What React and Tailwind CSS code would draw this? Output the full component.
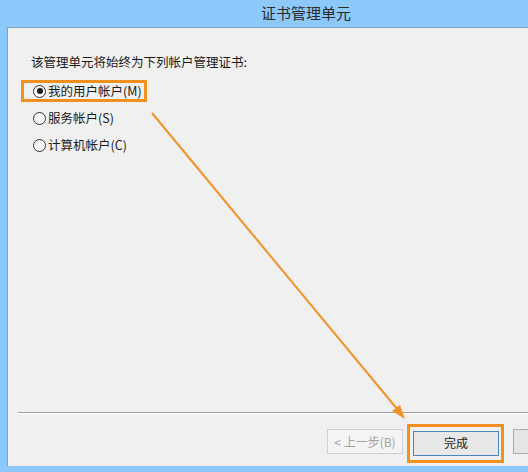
import React from "react";

const font = { fontFamily: '"Noto Sans CJK SC", "Noto Sans", sans-serif' };

function Radio({ checked }) {
  return (
    <span className="flex h-[13px] w-[13px] items-center justify-center rounded-full border border-[#333] bg-[#fafafa]">
      {checked && <span className="h-[6px] w-[6px] rounded-full bg-[#1a1a1a]" />}
    </span>
  );
}

function Option({ label, checked, marked }) {
  return (
    <div className="relative inline-flex h-[16px] items-center gap-[2px] self-start">
      <Radio checked={checked} />
      <span className="text-[12.5px] leading-[16px] text-[#1a1a1a]">{label}</span>
      {marked && (
        <span className="absolute -top-[3px] -bottom-[3px] -left-[12px] -right-[5px] border-[3px] border-[#f0901e]" />
      )}
    </div>
  );
}

export default function App() {
  const options = [
    { label: "我的用户帐户(M)", checked: true, marked: true },
    { label: "服务帐户(S)" },
    { label: "计算机帐户(C)" },
  ];

  return (
    <div className="relative h-[472px] w-[528px] overflow-hidden bg-[#8cc8f9]" style={font}>
      <div className="flex h-[27px] items-center justify-center pl-[84px] text-[15px] text-[#2a2a2a]">
        证书管理单元
      </div>

      <div className="ml-[7px] flex h-[439px] flex-col border-t border-l border-[#7da3c3] bg-[#f0f0f0]">
        <div className="flex flex-1 flex-col pt-[26px]">
          <p className="pl-[23px] text-[12.5px] leading-[16px] text-[#1a1a1a]">
            该管理单元将始终为下列帐户管理证书:
          </p>
          <div className="mt-[13px] flex flex-col gap-[11px] pl-[25px]">
            {options.map((o) => (
              <Option key={o.label} {...o} />
            ))}
          </div>
        </div>

        <div className="ml-[10px] h-px bg-[#a0a0a0]" />
        <div className="ml-[10px] h-px bg-[#fcfcfc]" />

        <div className="flex h-[52px] items-start gap-[10px] overflow-hidden pl-[319px] pt-[15px]">
          <button className="h-[25px] w-[76px] shrink-0 border border-[#cfcfcf] bg-[#f4f4f4] text-[12px] text-[#a3a3a3]">
            &lt; 上一步(B)
          </button>
          <div className="relative shrink-0">
            <button className="h-[25px] w-[86px] border border-[#4a86b8] bg-[#e8e8e8] text-[12px] text-[#1a1a1a]">
              完成
            </button>
            <span className="absolute -top-[5px] -bottom-[7px] -left-[6px] -right-[5px] border-[3px] border-[#f0901e]" />
          </div>
          <button className="ml-[4px] h-[25px] w-[86px] shrink-0 border border-[#adadad] bg-[#e5e5e5]" />
        </div>
      </div>

      <svg className="pointer-events-none absolute inset-0" width="528" height="472">
        <line x1="152" y1="113" x2="398" y2="410" stroke="#f0932a" strokeWidth="2" />
        <polygon points="405,419 392,411 400,405" fill="#f0932a" />
      </svg>
    </div>
  );
}
